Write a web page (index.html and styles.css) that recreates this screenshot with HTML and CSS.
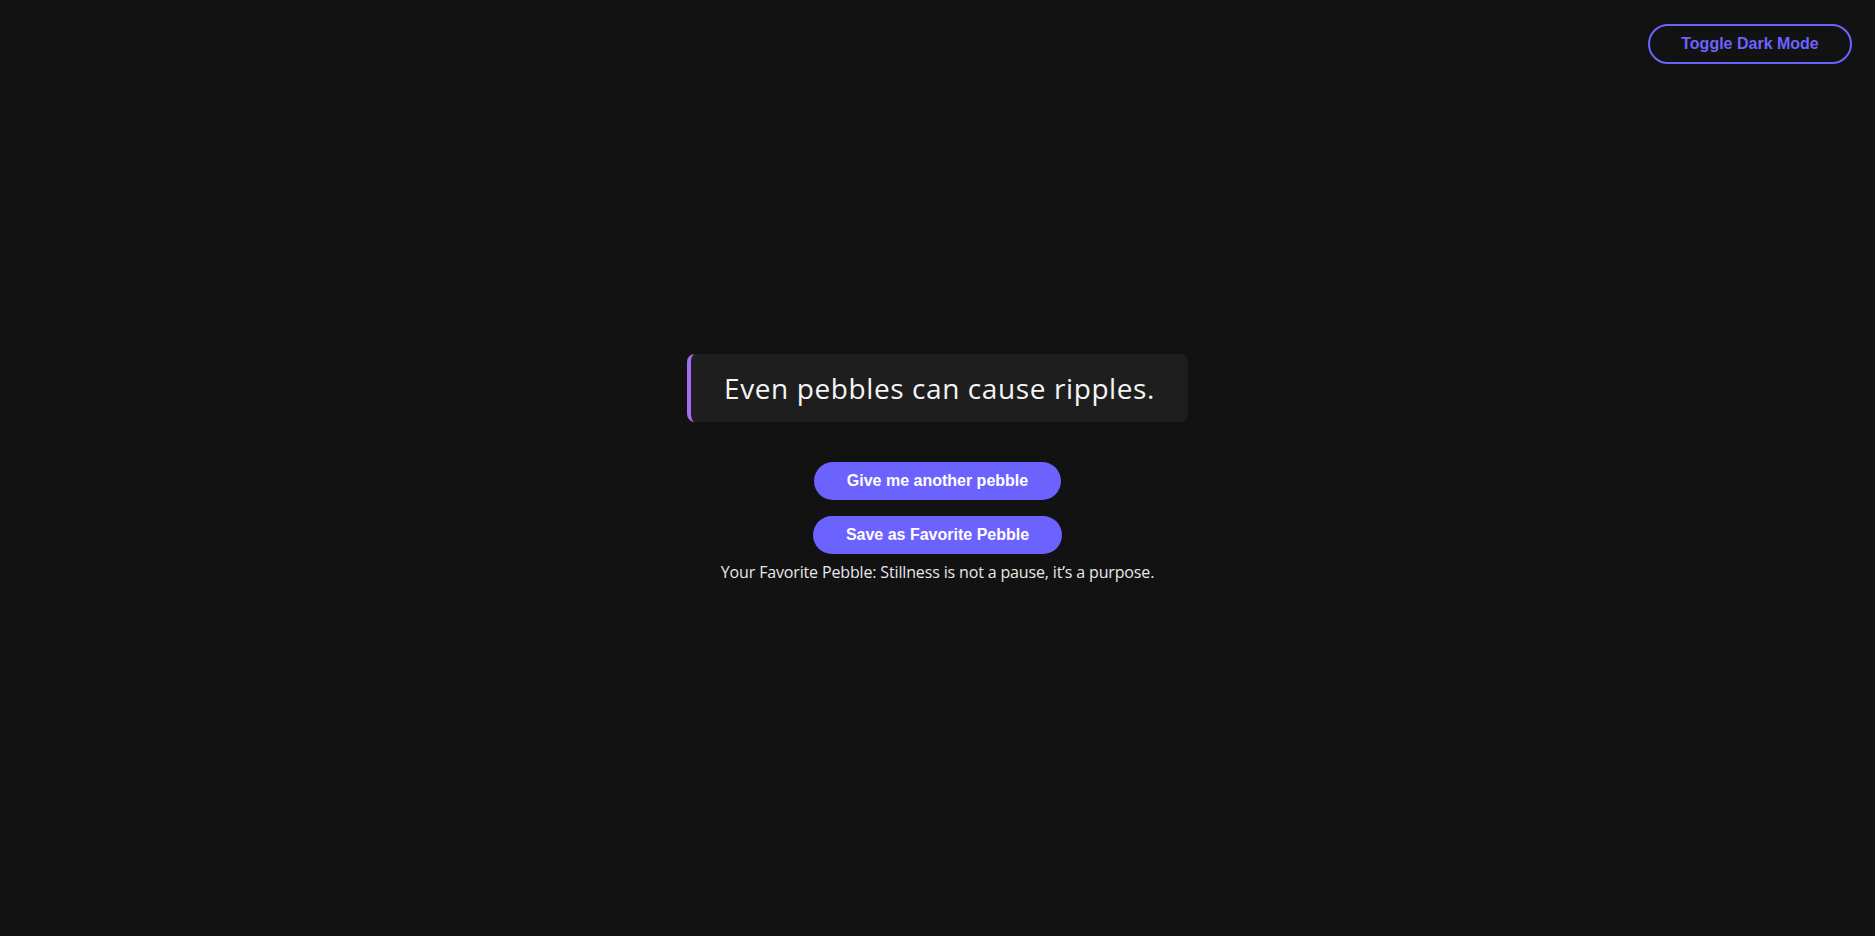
FILE: index.html
```html
<!DOCTYPE html>
<html lang="en">
<head>
<meta charset="utf-8">
<title>Pebbles</title>
<link rel="stylesheet" href="styles.css">
</head>
<body>
<button class="toggle">Toggle Dark Mode</button>
<main class="stage">
  <blockquote class="quote">Even pebbles can cause ripples.</blockquote>
  <div class="actions">
    <button class="pill">Give me another pebble</button>
    <button class="pill">Save as Favorite Pebble</button>
  </div>
  <p class="favorite">Your Favorite Pebble: Stillness is not a pause, it’s a purpose.</p>
</main>
</body>
</html>
```

FILE: styles.css
```css
html, body {
  margin: 0;
  padding: 0;
  height: 100%;
}
body {
  background: #121212;
  color: #f2f2f2;
  font-family: "Open Sans", Lato, sans-serif;
  overflow: hidden;
}
.toggle {
  position: absolute;
  top: 24px;
  right: 23px;
  width: 204px;
  height: 40px;
  border: 2px solid #6c63ff;
  border-radius: 20px;
  background: transparent;
  color: #6c63ff;
  font-family: "Liberation Sans", Arial, sans-serif;
  font-weight: bold;
  font-size: 16px;
  cursor: pointer;
}
.stage {
  height: 100%;
  display: flex;
  flex-direction: column;
  align-items: center;
  justify-content: center;
}
.quote {
  margin: 0;
  background: #1e1e1e;
  border-left: 4px solid #a56cf5;
  border-radius: 8px;
  padding: 16px 33px;
  font-size: 28px;
  line-height: 36px;
  font-weight: 500;
  letter-spacing: 0.6px;
  color: #f5f5f5;
}
.actions {
  margin-top: 40px;
  display: flex;
  flex-direction: column;
  align-items: center;
  gap: 16px;
}
.pill {
  background: #6c63ff;
  color: #ffffff;
  border: none;
  border-radius: 19px;
  padding: 0 33px;
  height: 38px;
  font-family: "Liberation Sans", Arial, sans-serif;
  font-weight: bold;
  font-size: 16px;
  cursor: pointer;
}
.favorite {
  margin: 8px 0 0;
  font-size: 16px;
  line-height: 20px;
  letter-spacing: -0.15px;
  color: #e8e8e8;
}
```
